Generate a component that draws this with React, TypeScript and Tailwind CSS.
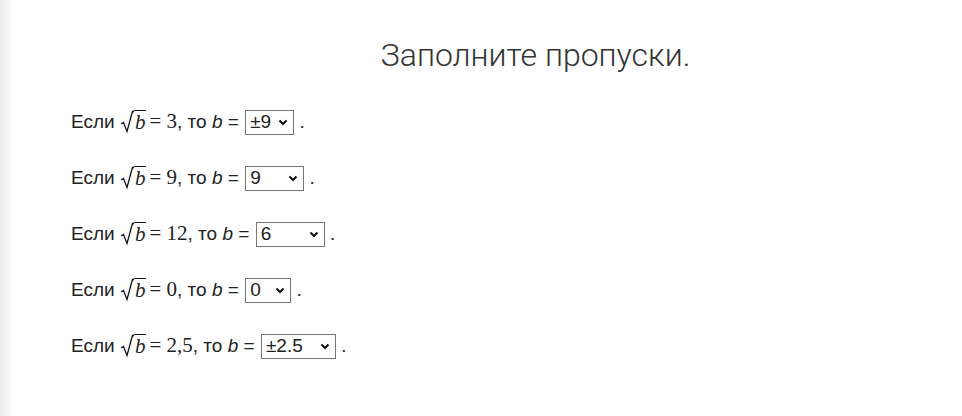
import React from "react";

const rows = [
  { n: "3", v: "±9", w: 49 },
  { n: "9", v: "9", w: 59 },
  { n: "12", v: "6", w: 69 },
  { n: "0", v: "0", w: 46 },
  { n: "2,5", v: "±2.5", w: 75 },
];

function Sqrt() {
  return (
    <span className="inline-flex items-start" style={{ height: 24 }}>
      <svg width="14" height="24" viewBox="0 0 14 24" className="shrink-0">
        <path d="M1 14 L3.5 12.5 L7 21.5 L12.5 1.5 L14 1.5" fill="none" stroke="#111" strokeWidth="1.3" />
      </svg>
      <span className="border-t-[1.3px] border-[#111] pl-[1px] pr-[1px] leading-[22px] italic text-[21px]" style={{ fontFamily: '"Liberation Serif", serif' }}>
        b
      </span>
    </span>
  );
}

function Chevron() {
  return (
    <svg width="10" height="7" viewBox="0 0 10 7">
      <path d="M1.5 1.5 L5 5 L8.5 1.5" fill="none" stroke="#111" strokeWidth="2" />
    </svg>
  );
}

export default function App() {
  return (
    <div className="w-[962px] h-[416px] flex bg-white">
      <div className="w-[11px] h-full bg-gradient-to-r from-[#ececec] to-[#f8f8f8]" />
      <div className="flex-1 flex flex-col">
        <h1
          className="text-center text-[32px] font-light text-[#333] pt-[34px] pl-[98px] leading-[42px]"
          style={{ fontFamily: "Roboto, sans-serif" }}
        >
          Заполните пропуски.
        </h1>
        <div
          className="flex flex-col pl-[60px] pt-[34px] gap-[32px] text-[19px] text-[#222]"
          style={{ fontFamily: '"Liberation Sans", Arial, sans-serif' }}
        >
          {rows.map((r, i) => (
            <div key={i} className="flex items-center h-[24px] whitespace-pre">
              <span>Если </span>
              <Sqrt />
              <span className="text-[21px] ml-[3px]" style={{ fontFamily: '"Liberation Serif", serif' }}>
                = {r.n}
              </span>
              <span>, то </span>
              <span className="italic">b</span>
              <span> = </span>
              <span
                className="inline-flex items-center justify-between border border-[#767676] h-[25px] pl-[4px] pr-[5px] ml-[1px]"
                style={{ width: r.w }}
              >
                <span>{r.v}</span>
                <Chevron />
              </span>
              <span> .</span>
            </div>
          ))}
        </div>
      </div>
    </div>
  );
}
